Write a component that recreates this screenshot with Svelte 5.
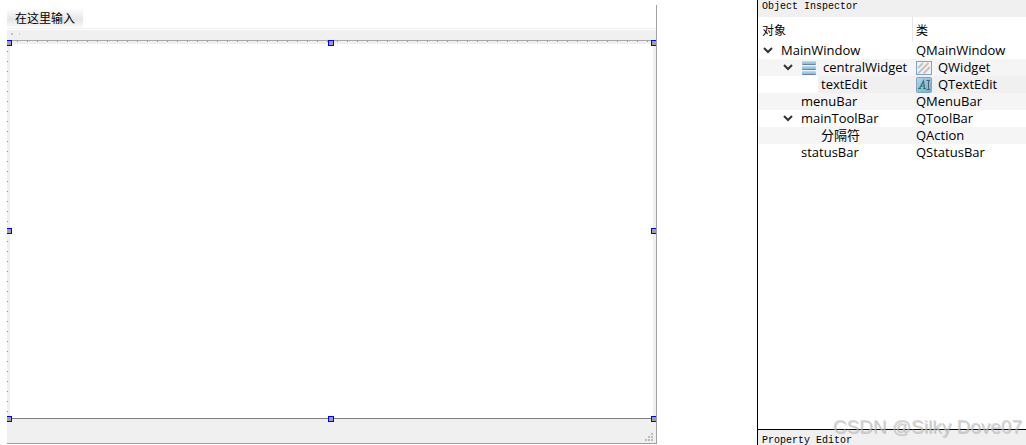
<script lang="ts">
  type Row = {
    name: string;
    type: string;
    level: number;
    open?: boolean;
    nameIcon?: string;
    typeIcon?: string;
    selected?: boolean;
  };

  const rows: Row[] = [
    { name: 'MainWindow', type: 'QMainWindow', level: 0, open: true },
    { name: 'centralWidget', type: 'QWidget', level: 1, open: true, nameIcon: 'layout', typeIcon: 'widget' },
    { name: 'textEdit', type: 'QTextEdit', level: 2, typeIcon: 'text', selected: true },
    { name: 'menuBar', type: 'QMenuBar', level: 1 },
    { name: 'mainToolBar', type: 'QToolBar', level: 1, open: true },
    { name: '分隔符', type: 'QAction', level: 2 },
    { name: 'statusBar', type: 'QStatusBar', level: 1 }
  ];

  const handles = ['nw', 'n', 'ne', 'w', 'e', 'sw', 's', 'se'];
</script>

{#snippet icon(kind: string)}
  <svg class="icon" width="16" height="16" viewBox="0 0 16 16" aria-hidden="true">
    <defs>
      <linearGradient id="bar" x1="0" y1="0" x2="0" y2="1">
        <stop offset="0" stop-color="#b9dcf3" />
        <stop offset="1" stop-color="#78afd5" />
      </linearGradient>
      <linearGradient id="tile" x1="0" y1="0" x2="1" y2="1">
        <stop offset="0" stop-color="#b4d6ec" />
        <stop offset="1" stop-color="#79a8ca" />
      </linearGradient>
    </defs>
    {#if kind === 'layout'}
      {#each [1, 6, 11] as y}
        <rect x="1" y={y} width="14" height="4" rx="1" fill="url(#bar)" />
        <path d="M1.5 {y + 3.5}H14.5" stroke="#6f8597" />
      {/each}
    {:else if kind === 'widget'}
      <rect x="0.5" y="1.5" width="15" height="13" fill="#f4f3f1" stroke="#79a3d8" />
      <path d="M2 8L7 3M2 13.5L12.5 3M7.5 13.5L14 7" stroke="#c4c3c0" stroke-width="2" />
    {:else}
      <rect x="0.5" y="0.5" width="15" height="15" rx="1" fill="url(#tile)" stroke="#7da6c6" />
      <path d="M2 11.5H5M3.5 11.5L7.5 4L8.5 11.5M5 9H8M7 11.5H10" fill="none" stroke="#2a7770" stroke-width="1.2" />
      <path d="M10.5 3.5H14M10.5 12.5H14M12.5 3.5V12.5" stroke="#4b6679" />
    {/if}
  </svg>
{/snippet}

<div class="designer">
  <main class="canvas">
    <div class="form">
      <div class="menubar">
        <button class="menu-item" type="button">在这里输入</button>
      </div>
      <div class="toolbar"><i class="grip"></i><i class="grip small"></i></div>
      <div class="central">
        <textarea class="text-edit" aria-label="textEdit"></textarea>
        {#each handles as handle}
          <span class="handle {handle}"></span>
        {/each}
      </div>
      <div class="statusbar">
        <svg width="8" height="8" viewBox="0 0 8 8" aria-hidden="true">
          <path d="M6 0h2v2H6zM3 3h2v2H3zM6 3h2v2H6zM0 6h2v2H0zM3 6h2v2H3zM6 6h2v2H6z" fill="#bdbdbd" />
        </svg>
      </div>
    </div>
  </main>

  <aside class="dock">
    <h2 class="title">Object Inspector</h2>
    <div class="tree">
      <table>
        <thead>
          <tr><th class="object-col">对象</th><th>类</th></tr>
        </thead>
        <tbody>
          {#each rows as row}
            <tr class:selected={row.selected}>
              <td class="object">
                <div class="node level-{row.level}">
                  {#if row.open}
                    <button class="branch" type="button" aria-label="Collapse {row.name}" aria-expanded="true">
                      <svg width="10" height="7" viewBox="0 0 10 7"><path d="M1 1L5 5L9 1" /></svg>
                    </button>
                  {:else}
                    <span class="branch"></span>
                  {/if}
                  <span class="label">
                    {#if row.nameIcon}{@render icon(row.nameIcon)}{/if}
                    {row.name}
                  </span>
                </div>
              </td>
              <td class="type">
                <span class="label">
                  {#if row.typeIcon}{@render icon(row.typeIcon)}{/if}
                  {row.type}
                </span>
              </td>
            </tr>
          {/each}
        </tbody>
      </table>
    </div>
    <h2 class="title property">Property Editor</h2>
  </aside>

  <div class="watermark">CSDN @Silky Dove07</div>
</div>

<style>
  :global(body) {
    background: #fff;
  }

  .designer {
    position: relative;
    display: grid;
    grid-template-columns: 1fr 269px;
    height: 100vh;
    overflow: hidden;
    color: #000;
    font: 13px/17px 'Open Sans', 'Noto Sans CJK SC', sans-serif;
  }

  button {
    padding: 0;
    border: 0;
    color: inherit;
    font: inherit;
  }

  .canvas {
    display: flex;
    padding: 5px 100px 1px 7px;
  }

  .form {
    position: relative;
    flex: 1;
    display: flex;
    flex-direction: column;
    overflow: hidden;
    border-right: 1px solid #a0a0a0;
    border-bottom: 1px solid #a0a0a0;
  }

  .menubar {
    height: 20px;
    padding-top: 3px;
    border-bottom: 1px solid #f0f0f0;
  }

  .menu-item {
    display: block;
    height: 19px;
    padding: 0 8px;
    background: linear-gradient(#fff, #e6e6e6 60%, #f8f8f8);
    font: 12px/18px 'Noto Sans CJK SC', sans-serif;
  }

  .toolbar {
    display: flex;
    gap: 6px;
    height: 7px;
    margin-top: 1px;
    padding: 3px 4px 0;
    background: #f0f0f0;
  }

  .grip {
    width: 2px;
    height: 2px;
    background: #c0c0c0;
  }

  .grip.small {
    width: 1px;
    background: #d0d0d0;
  }

  .central {
    position: relative;
    flex: 1;
    display: flex;
    padding: 3px 3px 0;
    border-top: 1px solid #a8a8a8;
    /* design grid, one dot every 10px */
    background: conic-gradient(from 270deg at 1px 1px, #909090 25%, #f0f0f0 0) 0 0 / 10px 10px;
  }

  .text-edit {
    flex: 1;
    margin: 0;
    padding: 2px;
    border: 0;
    border-bottom: 1px solid #808080;
    border-radius: 0;
    outline: 0;
    resize: none;
    background: #fff;
    font: inherit;
  }

  .handle {
    position: absolute;
    box-sizing: border-box;
    width: 6px;
    height: 6px;
    border: 1px solid #00f;
    background: #a0a0a0;
  }

  .nw, .n, .ne {
    top: -1px;
  }

  .w, .e {
    top: calc(50% - 2px);
  }

  .sw, .s, .se {
    bottom: -3px;
  }

  .nw, .w, .sw {
    left: -1px;
  }

  .n, .s {
    left: calc(50% - 4px);
  }

  .ne, .e, .se {
    right: -1px;
  }

  .statusbar {
    display: flex;
    align-items: flex-end;
    justify-content: flex-end;
    height: 22px;
    padding: 0 3px 2px 0;
    background: #f0f0f0;
  }

  .dock {
    display: flex;
    flex-direction: column;
    min-height: 0;
    border-left: 1px solid #000;
  }

  .title {
    flex: none;
    height: 17px;
    margin: 0;
    padding-left: 4px;
    background: #f0f0f0;
    font: 10px/14px 'Liberation Mono', monospace;
  }

  .title.property {
    height: 15px;
    border-top: 1px solid #000;
    line-height: 22px;
  }

  .tree {
    flex: 1;
    min-height: 0;
  }

  table {
    width: 100%;
    table-layout: fixed;
    border-collapse: separate;
    border-spacing: 0;
  }

  th {
    height: 25px;
    padding: 0 3px;
    text-align: left;
    font: 12px/25px 'Noto Sans CJK SC', sans-serif;
  }

  .object-col {
    box-sizing: border-box;
    width: 155px;
    padding-left: 4px;
    border-right: 1px solid #e5e5e5;
  }

  td {
    height: 17px;
    padding: 0;
  }

  tbody tr:nth-child(even) {
    background: #f5f5f5;
  }

  .selected .label {
    background: #f0f0f0;
  }

  .node {
    display: flex;
  }

  .level-1 {
    padding-left: 20px;
  }

  .level-2 {
    padding-left: 40px;
  }

  .branch {
    flex: none;
    display: flex;
    align-items: center;
    justify-content: center;
    width: 20px;
    height: 17px;
    background: none;
  }

  .branch path {
    fill: none;
    stroke: #333;
    stroke-width: 2;
  }

  .label {
    flex: 1;
    display: flex;
    align-items: center;
    gap: 6px;
    height: 17px;
    padding-left: 3px;
    white-space: nowrap;
  }

  .watermark {
    position: absolute;
    right: 4px;
    bottom: 8px;
    color: rgba(200, 200, 200, 0.7);
    font: 19px/20px 'Liberation Sans', sans-serif;
    text-shadow: 1px 1px 0 rgba(140, 140, 140, 0.4);
    pointer-events: none;
  }
</style>
